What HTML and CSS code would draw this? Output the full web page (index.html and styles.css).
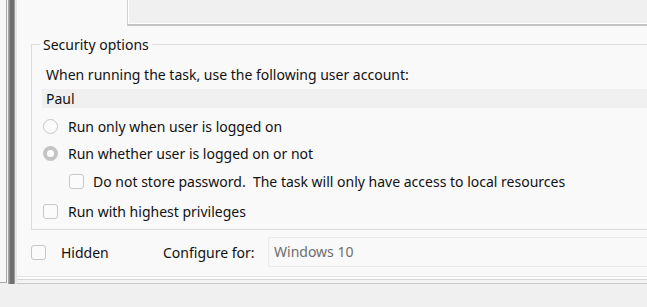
FILE: index.html
```html
<!DOCTYPE html>
<html>
<head>
<meta charset="utf-8">
<link rel="stylesheet" href="styles.css">
</head>
<body>
<div class="window">
  <div class="main">
    <div class="side"></div>
    <div class="bevel"></div>
    <div class="panel">
      <div class="top">
        <div class="top-gap"></div>
        <div class="top-box"></div>
      </div>
      <fieldset class="group">
        <legend>Security options</legend>
        <div class="account-label">When running the task, use the following user account:</div>
        <div class="account">Paul</div>
        <div class="opt first"><span class="radio"></span><span>Run only when user is logged on</span></div>
        <div class="opt"><span class="radio checked"></span><span>Run whether user is logged on or not</span></div>
        <div class="opt sub"><span class="check"></span><span>Do not store password.&nbsp; The task will only have access to local resources</span></div>
        <div class="opt last"><span class="check"></span><span>Run with highest privileges</span></div>
      </fieldset>
      <div class="bottom-row">
        <span class="check"></span>
        <span class="hidden-label">Hidden</span>
        <span class="cfg-label">Configure for:</span>
        <div class="combo">Windows 10</div>
      </div>
      <div class="panel-foot"></div>
    </div>
  </div>
  <div class="status"></div>
</div>
</body>
</html>
```

FILE: styles.css
```css
* { box-sizing: border-box; }
html, body { margin: 0; padding: 0; }
body {
  width: 647px;
  height: 307px;
  overflow: hidden;
  background: #f0f0f0;
  font-family: "Noto Sans", "Open Sans", sans-serif;
  font-size: 14px;
  color: #111111;
}
.window { display: flex; flex-direction: column; height: 307px; }
.main { display: flex; height: 284px; }
.side {
  width: 7px;
  background: #f7f7f7;
  border-right: 1px solid #a8a8a8;
  border-bottom: 1px solid #a8a8a8;
  height: 283px;
}
.bevel {
  width: 10px;
  background: linear-gradient(to right, #f2f2f2 0 1px, #a6a6a6 1px 2px, #8a8a8a 2px 3px, #6f6f6f 3px 7px, #9c9c9c 7px 8px, #e6e6e6 8px 10px);
  height: 284px;
}
.panel {
  flex: 1;
  background: #f9f9f9;
  display: flex;
  flex-direction: column;
}
.top { display: flex; height: 26px; flex: none; }
.top-gap { width: 110px; }
.top-box {
  flex: 1;
  background: #f0f0f0;
  border-left: 1px solid #d0d0d0;
  border-bottom: 2px solid #c4c4c4;
  box-shadow: inset 0 -1px 0 #ffffff, inset 1px 0 0 #ffffff;
}
.group {
  margin: 9px 0 0 14px;
  padding: 0 0 9px 0;
  border: 1px solid #dcdcdc;
  border-right: none;
  min-width: 0;
}
.group legend {
  margin-left: 8px;
  padding: 0 3px;
  line-height: 18px;
  position: relative;
  top: 1px;
}
.account-label {
  margin: 13px 0 0 14px;
  line-height: 18px;
  height: 18px;
}
.account {
  margin: 5px 0 0 10px;
  background: #f0f0f0;
  height: 19px;
  line-height: 19px;
  padding-left: 4px;
}
.opt {
  display: flex;
  align-items: center;
  gap: 10px;
  margin-left: 11px;
  height: 18px;
  margin-top: 9px;
  white-space: nowrap;
}
.opt.sub { margin-left: 37px; margin-top: 10px; gap: 9px; }
.opt.last { margin-top: 12px; }
.radio {
  width: 15px; height: 15px;
  border-radius: 50%;
  border: 1px solid #c6c6c6;
  background: #fbfbfb;
  flex: none;
}
.radio.checked {
  border: 4.5px solid #c4c4c4;
  background: #ffffff;
}
.check {
  width: 15px; height: 15px;
  border-radius: 3px;
  border: 1px solid #c6c6c6;
  background: #fbfbfb;
  flex: none;
}
.bottom-row {
  display: flex;
  align-items: center;
  margin: 7px 0 0 14px;
  height: 30px;
  flex: none;
}
.hidden-label { margin-left: 15px; width: 102px; }
.cfg-label { width: 105px; white-space: nowrap; }
.combo {
  flex: 1;
  height: 30px;
  border: 1px solid #ebebeb;
  border-right: none;
  background: #f9f9f9;
  color: #6d6d6d;
  padding-left: 5px;
  line-height: 28px;
}
.panel-foot {
  margin-top: auto;
  height: 8px;
  border-top: 1px solid #e4e4e4;
  border-bottom: 1px solid #c8c8c8;
  box-shadow: inset 0 2px 0 #fdfdfd, inset 0 -3px 0 #f4f4f4, inset 0 -4px 0 #d6d6d6;
}
.status { flex: 1; background: #f0f0f0; }
```
